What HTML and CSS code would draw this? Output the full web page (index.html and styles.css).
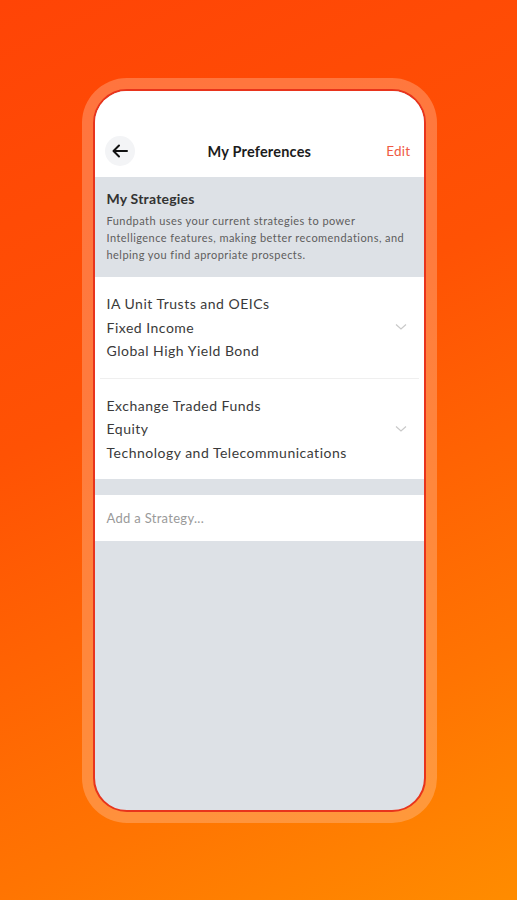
FILE: index.html
```html
<!DOCTYPE html>
<html>
<head>
<meta charset="utf-8">
<link rel="stylesheet" href="styles.css">
</head>
<body>
<div class="stage">
  <div class="frame">
    <div class="screen">
      <div class="status"></div>
      <div class="header">
        <div class="back">
          <svg width="20" height="20" viewBox="0 0 20 20"><path d="M17 10H3.5M9 4.5L3.5 10L9 15.5" fill="none" stroke="#111" stroke-width="2" stroke-linecap="round" stroke-linejoin="round"/></svg>
        </div>
        <div class="title">My Preferences</div>
        <div class="edit">Edit</div>
      </div>
      <div class="intro">
        <div class="intro-title">My Strategies</div>
        <div class="intro-text">Fundpath uses your current strategies to power<br>Intelligence features, making better recomendations, and<br>helping you find apropriate prospects.</div>
      </div>
      <div class="list">
        <div class="item">
          <div class="lines">
            <div>IA Unit Trusts and OEICs</div>
            <div>Fixed Income</div>
            <div>Global High Yield Bond</div>
          </div>
          <svg class="chev" width="12" height="8" viewBox="0 0 12 8"><path d="M1 1.5L6 6L11 1.5" fill="none" stroke="#c9c9c9" stroke-width="1.2"/></svg>
        </div>
        <div class="item">
          <div class="lines">
            <div>Exchange Traded Funds</div>
            <div>Equity</div>
            <div>Technology and Telecommunications</div>
          </div>
          <svg class="chev" width="12" height="8" viewBox="0 0 12 8"><path d="M1 1.5L6 6L11 1.5" fill="none" stroke="#c9c9c9" stroke-width="1.2"/></svg>
        </div>
      </div>
      <div class="add">Add a Strategy...</div>
    </div>
  </div>
</div>
</body>
</html>
```
FILE: styles.css
```css
html, body {
  margin: 0;
  padding: 0;
}
body {
  width: 517px;
  height: 900px;
  overflow: hidden;
  background: linear-gradient(155deg, #ff4406 0%, #ff5204 40%, #ff7402 78%, #ff8c00 100%);
  font-family: Lato, "Noto Sans", sans-serif;
}
.stage {
  display: flex;
  justify-content: center;
  padding-top: 78px;
  padding-left: 1px;
}
.frame {
  width: 333px;
  height: 723px;
  padding: 11px;
  border-radius: 45px;
  background: rgba(255, 200, 170, 0.35);
}
.screen {
  height: 100%;
  box-sizing: border-box;
  border: 2px solid #e8341c;
  border-radius: 34px;
  background: #dde1e6;
  overflow: hidden;
  display: flex;
  flex-direction: column;
}
.status {
  height: 34px;
  background: #fff;
}
.header {
  height: 52px;
  background: #fff;
  display: flex;
  align-items: center;
  padding: 0 13px 0 10px;
}
.back {
  width: 30px;
  height: 30px;
  border-radius: 50%;
  background: #f3f4f6;
  display: flex;
  align-items: center;
  justify-content: center;
}
.title {
  flex: 1;
  text-align: center;
  font-size: 14.5px;
  font-weight: 700;
  color: #1c1c1c;
  letter-spacing: 0.2px;
  padding-right: 2px;
}
.edit {
  font-size: 13.5px;
  color: #ef5a45;
  letter-spacing: 0.3px;
}
.intro {
  padding: 13px 12px 14px 12px;
}
.intro-title {
  font-size: 14px;
  line-height: 18px;
  font-weight: 700;
  color: #333;
  margin-bottom: 4px;
  letter-spacing: 0.2px;
}
.intro-text {
  font-size: 11px;
  line-height: 17px;
  color: #5d5d5d;
  letter-spacing: 0.45px;
  white-space: nowrap;
}
.list {
  background: #fff;
}
.item {
  display: flex;
  align-items: center;
  padding: 15px 12px 15px 7px;
  margin: 0 5px;
}
.item + .item {
  border-top: 1px solid #efefef;
}
.lines {
  flex: 1;
  font-size: 14px;
  line-height: 23.5px;
  color: #3a3a3a;
  letter-spacing: 0.5px;
}
.chev {
  display: block;
}
.add {
  margin-top: 16px;
  height: 46px;
  background: #fff;
  display: flex;
  align-items: center;
  padding-left: 12px;
  font-size: 13px;
  color: #9a9a9a;
  letter-spacing: 0.3px;
}
```
